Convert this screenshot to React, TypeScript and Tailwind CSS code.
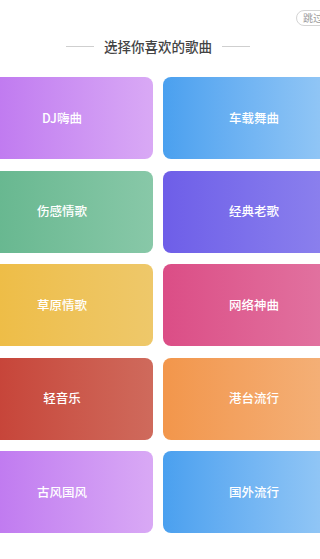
const genres = [
  { name: 'DJ嗨曲', bg: 'bg-gradient-to-r from-[#bc72ef] to-[#d9a9f5]' },
  { name: '车载舞曲', bg: 'bg-gradient-to-r from-[#4aa0ef] to-[#9acbf6]' },
  { name: '伤感情歌', bg: 'bg-gradient-to-r from-[#62b58c] to-[#88c8a8]' },
  { name: '经典老歌', bg: 'bg-gradient-to-r from-[#6e5ee8] to-[#8f84ee]' },
  { name: '草原情歌', bg: 'bg-gradient-to-r from-[#eebb3f] to-[#eec86a]' },
  { name: '网络神曲', bg: 'bg-gradient-to-r from-[#db4d86] to-[#e276a3]' },
  { name: '轻音乐', bg: 'bg-gradient-to-r from-[#c53d33] to-[#cf6a5c]' },
  { name: '港台流行', bg: 'bg-gradient-to-r from-[#f2964b] to-[#f4b37c]' },
  { name: '古风国风', bg: 'bg-gradient-to-r from-[#bc72ef] to-[#d9a9f5]' },
  { name: '国外流行', bg: 'bg-gradient-to-r from-[#4aa0ef] to-[#9acbf6]' },
]

export default function App() {
  return (
    <div
      className="w-[320px] h-[559px] overflow-hidden bg-white"
      style={{ fontFamily: '"Noto Sans CJK SC", "Noto Sans", sans-serif' }}
    >
      <div className="w-[374px] ml-[-29px]">
        {/* SKIP */}
        <div className="flex justify-end pt-[10px] pr-[15px]">
          <button className="h-[16px] px-[6px] rounded-full border border-[#d4d4d4] text-[10px] leading-[14px] text-[#9a9a9a]">
            跳过
          </button>
        </div>

        {/* TITLE */}
        <div className="mt-[10px] flex items-center justify-center gap-[10px]">
          <span className="w-[28px] h-px bg-[#cfcfcf]" />
          <h1 className="text-[13.5px] leading-[20px] font-medium text-[#444]">选择你喜欢的歌曲</h1>
          <span className="w-[28px] h-px bg-[#cfcfcf]" />
        </div>

        {/* GENRES */}
        <div className="mt-[21px] grid grid-cols-2 gap-x-[10px] gap-y-[11.5px]">
          {genres.map((g) => (
            <div
              key={g.name}
              className={`h-[82px] rounded-[8px] flex items-center justify-center text-white text-[12.5px] font-medium ${g.bg}`}
            >
              {g.name}
            </div>
          ))}
        </div>
      </div>
    </div>
  )
}
